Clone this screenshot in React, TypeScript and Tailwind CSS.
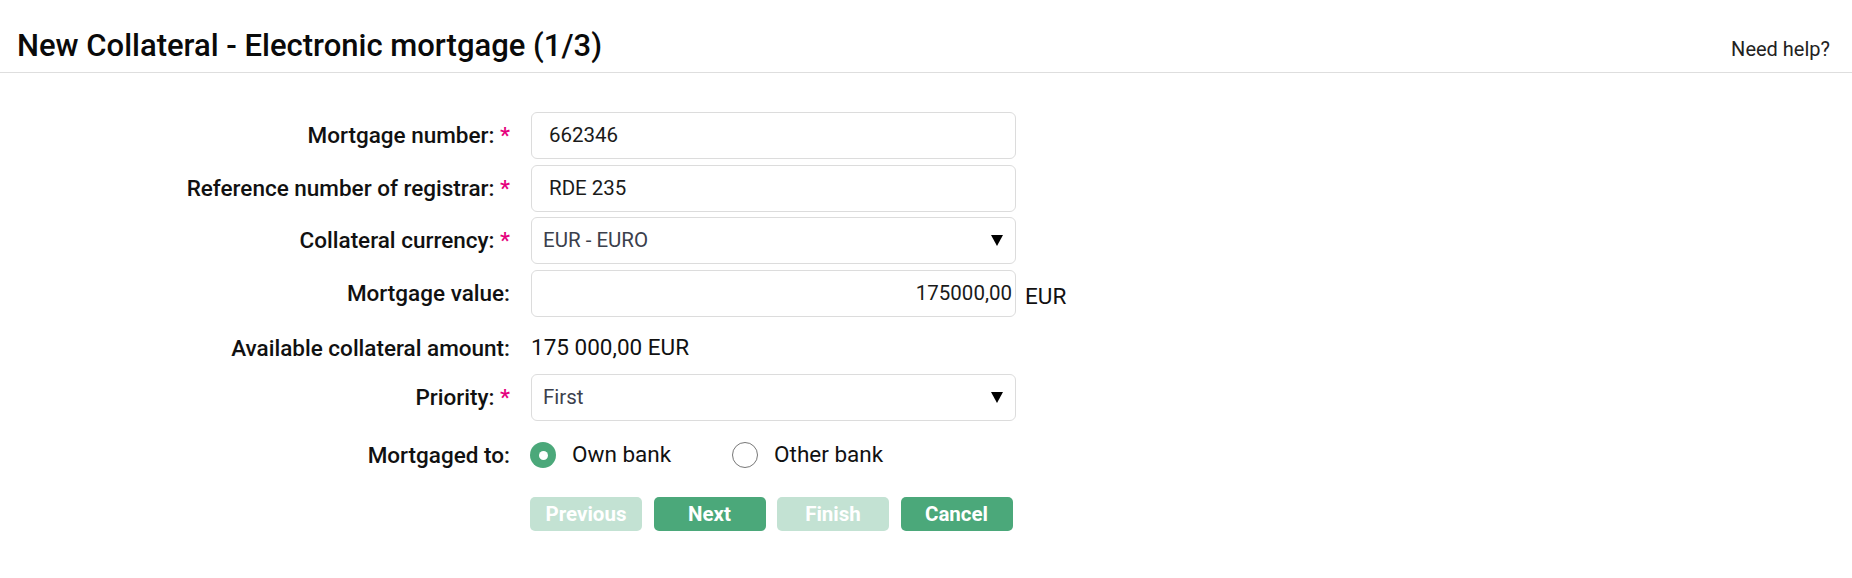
import React from "react";

function Req() {
  return <span className="text-[#e5007d]"> *</span>;
}

function Label({ children, req }: { children: React.ReactNode; req?: boolean }) {
  return (
    <div className="w-[510px] shrink-0 text-right text-[22.5px] font-medium text-[#111] leading-none">
      {children}
      {req && <Req />}
    </div>
  );
}

function Caret() {
  return (
    <svg width="12" height="11" viewBox="0 0 12 11" className="shrink-0">
      <polygon points="0,0 12,0 6,11" fill="#000" />
    </svg>
  );
}

function TextBox({ value, right }: { value: string; right?: boolean }) {
  return (
    <div
      className={
        "w-[485px] h-[47px] shrink-0 border border-[#dcdcdc] rounded-[6px] bg-white flex items-center text-[20.5px] text-[#1a1a1a] " +
        (right ? "justify-end pr-[3px]" : "pl-[17px]")
      }
    >
      {value}
    </div>
  );
}

function SelectBox({ value }: { value: string }) {
  return (
    <div className="w-[485px] h-[47px] shrink-0 border border-[#dcdcdc] rounded-[6px] bg-white flex items-center justify-between pl-[11px] pr-[12px] text-[20.5px] text-[#3b404c]">
      <span>{value}</span>
      <Caret />
    </div>
  );
}

function Btn({ children, disabled }: { children: React.ReactNode; disabled?: boolean }) {
  return (
    <button
      className={
        "w-[112px] h-[34px] rounded-[5px] text-white font-bold text-[20.5px] flex items-center justify-center " +
        (disabled ? "bg-[#c3e2d3]" : "bg-[#4ba87a]")
      }
    >
      {children}
    </button>
  );
}

export default function App() {
  return (
    <div className="w-[1852px] min-h-[578px] bg-white font-['Roboto',sans-serif] text-[#111]">
      <header className="flex items-baseline justify-between pl-[17px] pr-[22px] pt-[28px] pb-[8px] border-b border-[#dedede]">
        <h1 className="text-[31px] leading-[36px] font-medium text-[#0a0a0a]">
          New Collateral - Electronic mortgage (1/3)
        </h1>
        <a className="text-[20px] text-[#222]">Need help?</a>
      </header>

      <div className="mt-[39px] flex flex-col">
        <div className="flex items-center h-[47px]">
          <Label req>Mortgage number:</Label>
          <div className="ml-[21px]">
            <TextBox value="662346" />
          </div>
        </div>
        <div className="flex items-center h-[47px] mt-[5.5px]">
          <Label req>Reference number of registrar:</Label>
          <div className="ml-[21px]">
            <TextBox value="RDE 235" />
          </div>
        </div>
        <div className="flex items-center h-[47px] mt-[5.5px]">
          <Label req>Collateral currency:</Label>
          <div className="ml-[21px]">
            <SelectBox value="EUR - EURO" />
          </div>
        </div>
        <div className="flex items-center h-[47px] mt-[5.5px]">
          <Label>Mortgage value:</Label>
          <div className="ml-[21px] flex items-center">
            <TextBox value="175000,00" right />
            <span className="ml-[9px] pt-[8px] text-[22.5px] text-[#111]">EUR</span>
          </div>
        </div>
        <div className="flex items-center h-[42px] mt-[10.5px]">
          <Label>Available collateral amount:</Label>
          <div className="ml-[21px] text-[22.5px] text-[#111]">175 000,00 EUR</div>
        </div>
        <div className="flex items-center h-[47px] mt-[5px]">
          <Label req>Priority:</Label>
          <div className="ml-[21px]">
            <SelectBox value="First" />
          </div>
        </div>
        <div className="flex items-center h-[26px] mt-[21px]">
          <Label>Mortgaged to:</Label>
          <div className="ml-[20px] flex items-center text-[22.5px] text-[#111]">
            <span className="w-[26px] h-[26px] rounded-full bg-[#4ba87a] flex items-center justify-center">
              <span className="w-[9px] h-[9px] rounded-full bg-white" />
            </span>
            <span className="ml-[16px]">Own bank</span>
            <span className="ml-[61px] w-[26px] h-[26px] rounded-full border border-[#777] bg-white" />
            <span className="ml-[16px]">Other bank</span>
          </div>
        </div>
        <div className="flex mt-[29px] pl-[530px] gap-[11.5px]">
          <Btn disabled>Previous</Btn>
          <Btn>Next</Btn>
          <Btn disabled>Finish</Btn>
          <Btn>Cancel</Btn>
        </div>
      </div>
    </div>
  );
}
